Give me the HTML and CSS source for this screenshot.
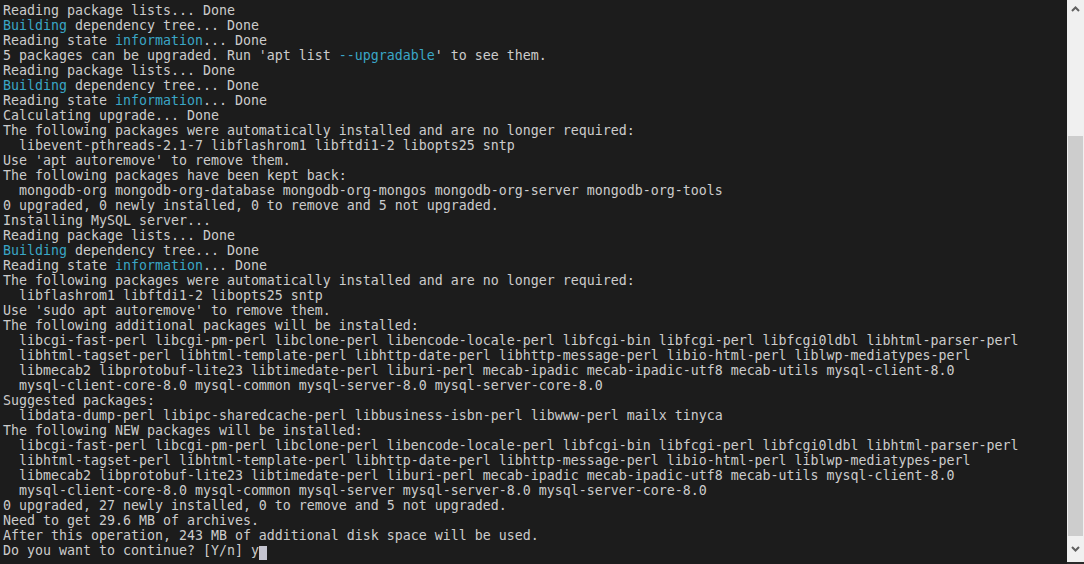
FILE: index.html
```html
<!DOCTYPE html>
<html>
<head>
<meta charset="utf-8">
<link rel="stylesheet" href="styles.css">
</head>
<body>
<div class="window">
<pre class="term">Reading package lists... Done
<span class="c">Building</span> dependency tree... Done
Reading state <span class="c">information</span>... Done
5 packages can be upgraded. Run 'apt list <span class="c">--upgradable</span>' to see them.
Reading package lists... Done
<span class="c">Building</span> dependency tree... Done
Reading state <span class="c">information</span>... Done
Calculating upgrade... Done
The following packages were automatically installed and are no longer required:
  libevent-pthreads-2.1-7 libflashrom1 libftdi1-2 libopts25 sntp
Use 'apt autoremove' to remove them.
The following packages have been kept back:
  mongodb-org mongodb-org-database mongodb-org-mongos mongodb-org-server mongodb-org-tools
0 upgraded, 0 newly installed, 0 to remove and 5 not upgraded.
Installing MySQL server...
Reading package lists... Done
<span class="c">Building</span> dependency tree... Done
Reading state <span class="c">information</span>... Done
The following packages were automatically installed and are no longer required:
  libflashrom1 libftdi1-2 libopts25 sntp
Use 'sudo apt autoremove' to remove them.
The following additional packages will be installed:
  libcgi-fast-perl libcgi-pm-perl libclone-perl libencode-locale-perl libfcgi-bin libfcgi-perl libfcgi0ldbl libhtml-parser-perl
  libhtml-tagset-perl libhtml-template-perl libhttp-date-perl libhttp-message-perl libio-html-perl liblwp-mediatypes-perl
  libmecab2 libprotobuf-lite23 libtimedate-perl liburi-perl mecab-ipadic mecab-ipadic-utf8 mecab-utils mysql-client-8.0
  mysql-client-core-8.0 mysql-common mysql-server-8.0 mysql-server-core-8.0
Suggested packages:
  libdata-dump-perl libipc-sharedcache-perl libbusiness-isbn-perl libwww-perl mailx tinyca
The following NEW packages will be installed:
  libcgi-fast-perl libcgi-pm-perl libclone-perl libencode-locale-perl libfcgi-bin libfcgi-perl libfcgi0ldbl libhtml-parser-perl
  libhtml-tagset-perl libhtml-template-perl libhttp-date-perl libhttp-message-perl libio-html-perl liblwp-mediatypes-perl
  libmecab2 libprotobuf-lite23 libtimedate-perl liburi-perl mecab-ipadic mecab-ipadic-utf8 mecab-utils mysql-client-8.0
  mysql-client-core-8.0 mysql-common mysql-server mysql-server-8.0 mysql-server-core-8.0
0 upgraded, 27 newly installed, 0 to remove and 5 not upgraded.
Need to get 29.6 MB of archives.
After this operation, 243 MB of additional disk space will be used.
Do you want to continue? [Y/n] y<span class="cursor"> </span></pre>
<div class="scrollbar">
<div class="arrow">
<svg width="9" height="6" viewBox="0 0 9 6"><polyline points="1,5 4.5,1.5 8,5" fill="none" stroke="#606060" stroke-width="2"/></svg>
</div>
<div class="track">
<div class="thumb"></div>
</div>
<div class="arrow">
<svg width="9" height="6" viewBox="0 0 9 6"><polyline points="1,1 4.5,4.5 8,1" fill="none" stroke="#606060" stroke-width="2"/></svg>
</div>
<div class="edge"></div>
</div>
</div>
</body>
</html>
```

FILE: styles.css
```css
html, body {
  margin: 0;
  padding: 0;
  background: #1c1c1c;
}
.window {
  display: flex;
  width: 1084px;
  height: 564px;
  overflow: hidden;
}
.term {
  flex: 1;
  margin: 0;
  padding: 3px 0 0 3px;
  background: #1c1c1c;
  color: #cccccc;
  font-family: "DejaVu Sans Mono", "Liberation Mono", monospace;
  font-size: 13.29px;
  line-height: 15px;
  white-space: pre;
  overflow: hidden;
}
.c {
  color: #3aa6c6;
}
.cursor {
  background: #c4c4d0;
  display: inline-block;
  width: 8px;
  height: 14px;
  vertical-align: -3px;
}
.scrollbar {
  width: 17px;
  flex: none;
  display: flex;
  flex-direction: column;
  background: #f0f0f0;
}
.arrow {
  height: 17px;
  display: flex;
  align-items: center;
  justify-content: center;
  flex: none;
}
.track {
  flex: 1;
  display: flex;
  flex-direction: column;
  padding: 0 1px;
}
.thumb {
  margin-top: 119px;
  margin-bottom: 4px;
  flex: 1;
  background: #cdcdcd;
}
.edge {
  height: 2px;
  background: #2a2a2a;
  flex: none;
  margin-top: 5px;
}
```
